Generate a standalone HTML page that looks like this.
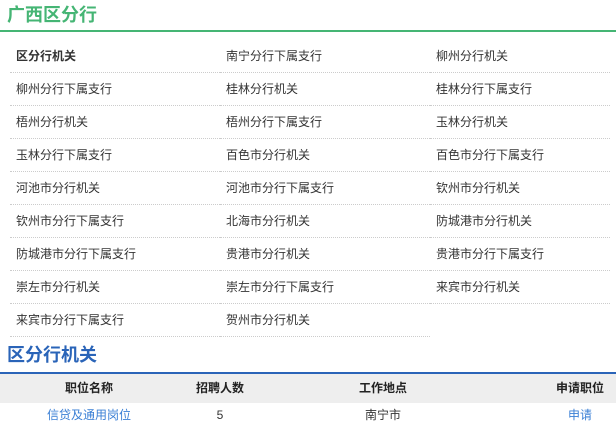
<!DOCTYPE html>
<html><head><meta charset="utf-8"><style>
body{margin:0;width:616px;height:428px;overflow:hidden;background:#fff;font-family:"Liberation Sans","Noto Sans CJK SC",sans-serif;font-size:12px;color:#333}
.t1{position:absolute;left:7px;top:3px;font-size:18px;line-height:24px;color:#45b574;font-weight:bold}
.l1{position:absolute;left:0;top:30px;width:616px;height:2px;background:#45b574}
.wrap{position:absolute;left:10px;top:40px;width:600px;height:300px;overflow:hidden}
.grid{width:630px}
.c{float:left;width:210px;height:33px;line-height:32px;border-bottom:1px dotted #ccc;padding-left:6px;box-sizing:border-box}
.c.b{font-weight:bold}
.t2{position:absolute;left:7px;top:343px;font-size:18px;line-height:24px;color:#2a64b8;font-weight:bold}
.l2{position:absolute;left:0;top:372px;width:616px;height:2px;background:#2a64b8}
.hd{position:absolute;left:0;top:374px;width:616px;height:29px;background:#eee;font-weight:bold;color:#222}
.row{position:absolute;left:0;top:403px;width:616px;height:25px}
.hd span,.row span{position:absolute;top:0;line-height:29px;transform:translateX(-50%);white-space:nowrap}
.row span{line-height:25px}
a{color:#3a7fd5;text-decoration:none}
</style></head><body>
<div class="t1">广西区分行</div><div class="l1"></div>
<div class="wrap"><div class="grid">
<div class="c b">区分行机关</div><div class="c">南宁分行下属支行</div><div class="c">柳州分行机关</div>
<div class="c">柳州分行下属支行</div><div class="c">桂林分行机关</div><div class="c">桂林分行下属支行</div>
<div class="c">梧州分行机关</div><div class="c">梧州分行下属支行</div><div class="c">玉林分行机关</div>
<div class="c">玉林分行下属支行</div><div class="c">百色市分行机关</div><div class="c">百色市分行下属支行</div>
<div class="c">河池市分行机关</div><div class="c">河池市分行下属支行</div><div class="c">钦州市分行机关</div>
<div class="c">钦州市分行下属支行</div><div class="c">北海市分行机关</div><div class="c">防城港市分行机关</div>
<div class="c">防城港市分行下属支行</div><div class="c">贵港市分行机关</div><div class="c">贵港市分行下属支行</div>
<div class="c">崇左市分行机关</div><div class="c">崇左市分行下属支行</div><div class="c">来宾市分行机关</div>
<div class="c">来宾市分行下属支行</div><div class="c">贺州市分行机关</div>
</div></div>
<div class="t2">区分行机关</div><div class="l2"></div>
<div class="hd"><span style="left:89px">职位名称</span><span style="left:220px">招聘人数</span><span style="left:383px">工作地点</span><span style="left:580px">申请职位</span></div>
<div class="row"><span style="left:89px"><a>信贷及通用岗位</a></span><span style="left:220px">5</span><span style="left:383px">南宁市</span><span style="left:580px"><a>申请</a></span></div>
</body></html>
